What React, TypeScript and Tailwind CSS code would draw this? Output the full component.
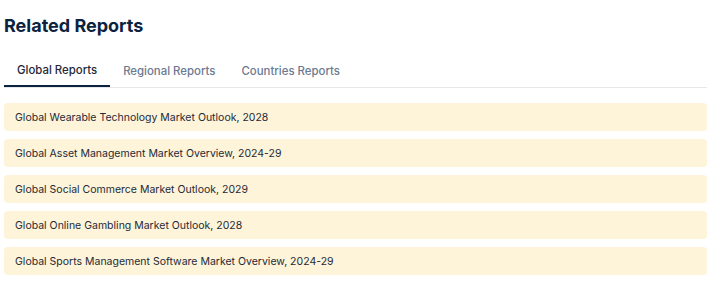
import React from "react";

const reports = [
  "Global Wearable Technology Market Outlook, 2028",
  "Global Asset Management Market Overview, 2024-29",
  "Global Social Commerce Market Outlook, 2029",
  "Global Online Gambling Market Outlook, 2028",
  "Global Sports Management Software Market Overview, 2024-29",
];

export default function App() {
  return (
    <div className="w-[712px] h-[285px] bg-white px-[4px] pt-[14px]" style={{ fontFamily: "Inter, 'Noto Sans', sans-serif" }}>
      <h2 className="text-[18px] leading-[24px] font-bold text-[#0c2340]">Related Reports</h2>
      <div className="mt-[18px] w-[703px] flex border-b border-[#e5e7eb] text-[11.4px] font-medium">
        <div className="px-[13px] h-[31px] flex items-center text-[#1f2937] border-b-2 border-[#0c2340] -mb-px">Global Reports</div>
        <div className="px-[13px] h-[31px] flex items-center text-[#6b7a90]">Regional Reports</div>
        <div className="px-[13px] h-[31px] flex items-center text-[#6b7a90]">Countries Reports</div>
      </div>
      <div className="mt-[15px] w-[703px] flex flex-col gap-[8px]">
        {reports.map((r) => (
          <div key={r} className="h-[28px] rounded-[4px] bg-[#fef4d9] flex items-center px-[11px] pt-px text-[10.5px] text-[#1f2937]">
            {r}
          </div>
        ))}
      </div>
    </div>
  );
}
